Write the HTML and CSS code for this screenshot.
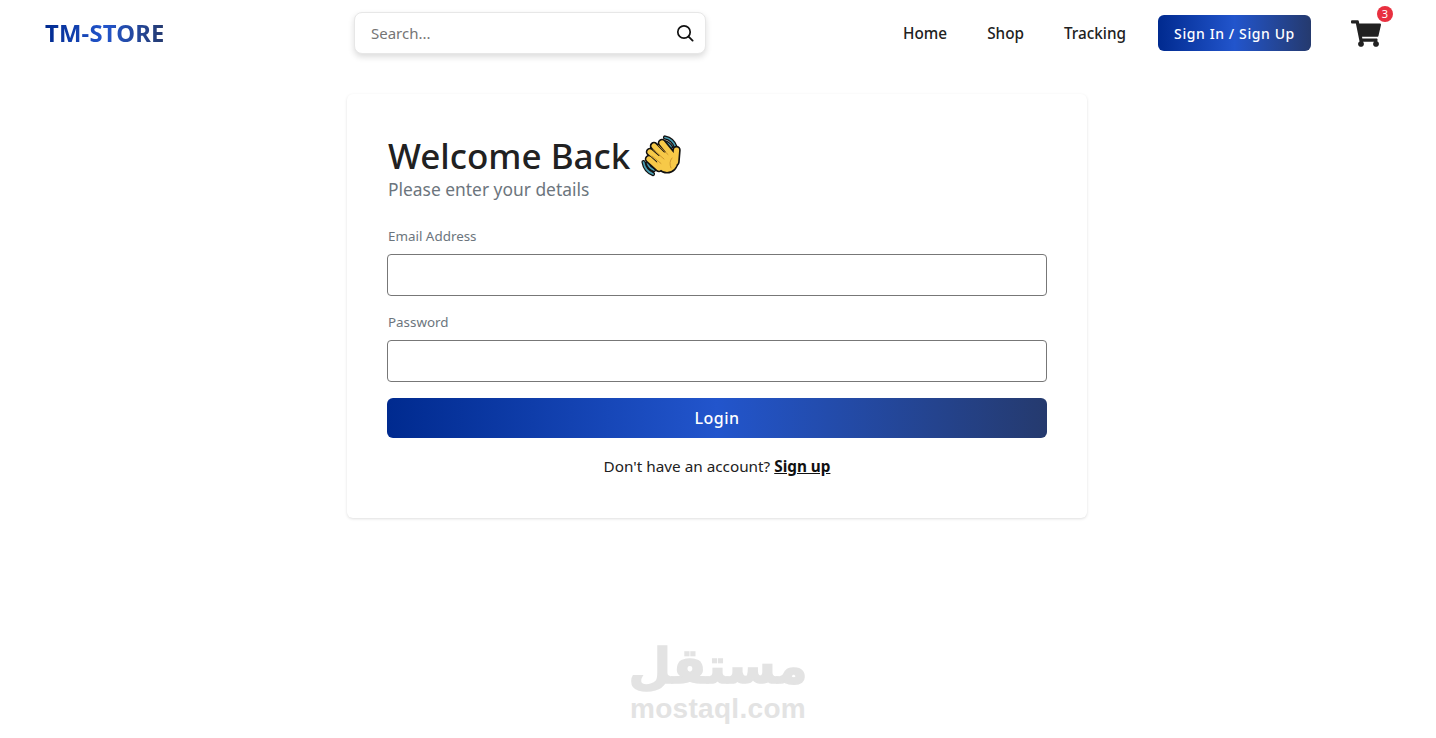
FILE: index.html
```html
<!DOCTYPE html>
<html lang="en">
<head>
<meta charset="utf-8">
<title>TM-STORE</title>
<link rel="stylesheet" href="styles.css">
</head>
<body>
<header class="header">
  <div class="brand"><a class="logo">TM-STORE</a></div>
  <div class="search">
    <span class="search-text">Search...</span>
    <svg class="search-icon" viewBox="0 0 18 18" width="18" height="18"><circle cx="8" cy="8" r="6.2" fill="none" stroke="#111" stroke-width="1.7"/><path d="M12.6 12.6 16.6 16.6" stroke="#111" stroke-width="1.9" stroke-linecap="round"/></svg>
  </div>
  <nav class="nav">
    <a class="nav-link">Home</a>
    <a class="nav-link">Shop</a>
    <a class="nav-link">Tracking</a>
    <a class="signin">Sign In / Sign Up</a>
    <div class="cart">
      <svg viewBox="0 0 576 512" width="30" height="27"><path fill="#212121" d="M528.12 301.319l47.273-208C578.806 78.301 567.391 64 551.990 64H159.208l-9.166-44.810C147.758 8.021 137.930 0 126.529 0H24C10.745 0 0 10.745 0 24v16c0 13.255 10.745 24 24 24h69.883l70.248 343.435C147.325 417.100 136 435.222 136 456c0 30.928 25.072 56 56 56s56-25.072 56-56c0-15.674-6.447-29.835-16.824-40h209.647C430.447 426.165 424 440.326 424 456c0 30.928 25.072 56 56 56s56-25.072 56-56c0-22.172-12.888-41.332-31.579-50.405l5.517-24.276c3.413-15.018-8.002-29.319-23.403-29.319H218.117l-6.545-32h293.145c11.206 0 20.920-7.754 23.403-18.681z"/></svg>
      <span class="badge">3</span>
    </div>
  </nav>
</header>
<main class="main">
  <section class="card">
    <h1 class="title">Welcome Back
      <svg class="wave" viewBox="12 13 42 42" width="42" height="42">
        <g fill="none" stroke-linecap="round" stroke-linejoin="round">
          <g stroke="#111" stroke-width="4.200">
            <path d="M36 15.500Q44 17 46.500 25M35 20Q40 21 42 25"/>
            <path d="M14.500 40Q16 49 24 52M18.500 41Q20 46 25 48"/>
          </g>
          <g stroke="#4a9fb5" stroke-width="1.700">
            <path d="M36 15.500Q44 17 46.500 25M35 20Q40 21 42 25"/>
            <path d="M14.500 40Q16 49 24 52M18.500 41Q20 46 25 48"/>
          </g>
          <g stroke="#111" stroke-width="8.500">
            <path d="M20 37 30 46M21 30 34 41M25 24 38 37M33 21 42 32M47.500 28 46.500 40"/>
          </g>
          <circle cx="38" cy="40" r="10.500" fill="#111" stroke="#111" stroke-width="2"/>
          <g stroke="#f7c948" stroke-width="5.200">
            <path d="M20 37 30 46M21 30 34 41M25 24 38 37M33 21 42 32M47.500 28 46.500 40"/>
          </g>
          <circle cx="38" cy="40" r="10" fill="#f7c948"/>
          <path d="M23 34 32 41.500M24 27.500 35 37M29.500 23.500 39 32.500M43 36Q39.500 40 42 46" stroke="#c9922a" stroke-width=".9"/>
        </g>
      </svg>
    </h1>
    <p class="subtitle">Please enter your details</p>
    <form class="form">
      <label class="field"><span class="label">Email Address</span><span class="input"></span></label>
      <label class="field"><span class="label">Password</span><span class="input"></span></label>
      <div class="login">Login</div>
    </form>
    <p class="alt">Don't have an account? <a class="alt-link">Sign up</a></p>
  </section>
</main>
<div class="watermark">
  <span class="wm-ar" lang="ar" dir="rtl">مستقل</span>
  <span class="wm-en">mostaql.com</span>
</div>
</body>
</html>
```
FILE: styles.css
```css
* { box-sizing: border-box; }
html, body { margin: 0; height: 100%; }
body {
  background: #fff;
  color: #212121;
  font-family: "Noto Sans", "Open Sans", sans-serif;
  overflow: hidden;
}
.header {
  display: flex;
  align-items: center;
  height: 66px;
  padding: 0 42px 0 45px;
}
.brand { flex: 0 0 309px; }
.logo {
  display: inline-block;
  font-size: 23.800px;
  font-weight: 700;
  letter-spacing: 0.2px;
  background: linear-gradient(90deg, #002a8f, #2255cc 50%, #253a6e);
  -webkit-background-clip: text;
  background-clip: text;
  color: transparent;
}
.search {
  display: flex;
  align-items: center;
  justify-content: space-between;
  width: 352px;
  height: 42px;
  padding: 0 11px 0 16px;
  border: 1px solid #e7e7e7;
  border-radius: 8px;
  background: #fff;
  box-shadow: 0 3px 6px rgba(0, 0, 0, 0.14);
}
.search-text { font-size: 15px; color: #757575; }
.search-icon { display: block; }
.nav { display: flex; align-items: center; margin-left: auto; }
.nav-link {
  margin-right: 40px;
  font-size: 15.300px;
  font-weight: 500;
  color: #212121;
}
.signin {
  display: flex;
  align-items: center;
  justify-content: center;
  width: 153px;
  height: 36px;
  margin-left: -8px;
  border-radius: 6px;
  background: linear-gradient(90deg, #002a8f, #2255cc 50%, #253a6e);
  color: #fff;
  font-size: 14px;
  font-weight: 500;
  letter-spacing: 0.6px;
}
.cart { position: relative; margin-left: 40px; width: 30px; height: 27px; margin-right: 13px; }
.cart svg { display: block; }
.badge {
  position: absolute;
  top: -14px;
  left: 26px;
  width: 16px;
  height: 16px;
  border-radius: 50%;
  background: #e8303f;
  color: #fff;
  font-size: 11px;
  line-height: 16px;
  text-align: center;
}
.main { display: flex; justify-content: center; padding: 28px 2px 0 0; }
.card {
  width: 740px;
  height: 424px;
  padding: 40px;
  border-radius: 6px;
  background: #fff;
  box-shadow: 0 1px 3px rgba(0, 0, 0, 0.13);
}
.title {
  display: flex;
  align-items: center;
  gap: 11px;
  margin: 0;
  height: 43px;
  padding-left: 1px;
  font-size: 35px;
  font-weight: 500;
  color: #212121;
}
.wave { display: block; }
.subtitle { margin: 0 0 23px; padding-left: 1px; font-size: 17.400px; line-height: 24px; color: #6c757d; }
.form { display: flex; flex-direction: column; }
.field { display: block; margin-bottom: 14px; }
.field:nth-child(2) { margin-bottom: 16px; }
.label { display: block; height: 24px; margin-bottom: 6px; padding-left: 1px; font-size: 13.400px; line-height: 24px; color: #6c757d; }
.input {
  display: block;
  height: 42px;
  border: 1px solid #777;
  border-radius: 4px;
  background: #fff;
}
.login {
  height: 40px;
  border-radius: 6px;
  background: linear-gradient(90deg, #002a8f, #2255cc 50%, #253a6e);
  color: #fff;
  font-size: 16px;
  font-weight: 500;
  line-height: 40px;
  letter-spacing: 0.5px;
  text-align: center;
}
.alt { margin: 16px 0 0; font-size: 15.300px; line-height: 24px; text-align: center; color: #212121; }
.alt-link { font-weight: 700; color: #111; text-decoration: underline; }
.watermark {
  position: absolute;
  left: 631px;
  top: 638px;
  width: 174px;
  display: flex;
  flex-direction: column;
  align-items: center;
  color: #e3e3e3;
}
.wm-ar {
  font-family: "DejaVu Sans", sans-serif;
  font-size: 49px;
  font-weight: 700;
  line-height: 57px;
  -webkit-text-stroke: 1.500px #e3e3e3;
}
.wm-en { font-family: "Liberation Sans", sans-serif; font-size: 28px; font-weight: 700; line-height: 28px; letter-spacing: 0.3px; }
```
